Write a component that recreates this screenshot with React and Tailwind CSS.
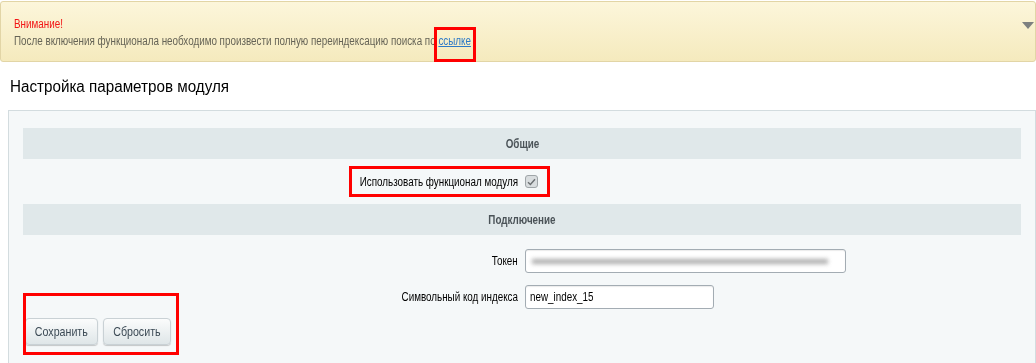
import React from 'react';

const FONT = { fontFamily: '"Liberation Sans", Arial, sans-serif' };

// The original UI text is a narrow Arial; squeeze the glyphs horizontally
const Narrow = ({ origin = 'origin-left', children }) => (
  <span className={`inline-block whitespace-nowrap scale-x-[0.82] ${origin}`}>{children}</span>
);

const SectionHeader = ({ title }) => (
  <div className="h-[31px] bg-[#e0e8ea] flex items-center justify-center text-[12px] font-bold text-[#4b5358]">
    <Narrow origin="origin-center">{title}</Narrow>
  </div>
);

const FieldRow = ({ label, children }) => (
  <div className="grid grid-cols-[498px_1fr] items-center">
    <div className="text-right pr-[3px] text-[12px] text-[#000]">
      <Narrow origin="origin-right">{label}</Narrow>
    </div>
    <div className="pl-[4px] flex items-center">{children}</div>
  </div>
);

const TextInput = ({ width, children }) => (
  <div
    className={`${width} h-[24px] bg-white border border-[#a3acb3] rounded-[3px] shadow-[inset_0_1px_1px_rgba(0,0,0,0.08)] flex items-center px-[4px] text-[12px] text-[#000]`}
  >
    {children}
  </div>
);

const Button = ({ children, width }) => (
  <button
    className={`${width} h-[27px] rounded-[4px] border border-[#c9d1d5] bg-gradient-to-b from-[#fbfcfc] to-[#dfe6e8] shadow-[0_1px_1px_rgba(0,0,0,0.2)] text-[13px] text-[#3c4a55] flex items-center justify-center`}
  >
    <Narrow origin="origin-center">{children}</Narrow>
  </button>
);

export default function App() {
  return (
    <div className="relative w-[1036px] h-[363px] bg-white overflow-hidden" style={FONT}>
      {/* Warning */}
      <div className="mt-[1px] h-[61px] rounded-[3px] border border-[#e2d5a6] bg-gradient-to-b from-[#fcf6db] to-[#f5eabd] pl-[13px] pt-[15px] relative">
        <div className="text-[12px] leading-[15px] text-[#f21515]">
          <Narrow>Внимание!</Narrow>
        </div>
        <div className="text-[12px] leading-[15px] mt-[2px] text-[#666456]">
          <Narrow>
            После включения функционала необходимо произвести полную переиндексацию поиска по{' '}
            <a className="text-[#2c79c7] underline" href="#">ссылке</a>
          </Narrow>
        </div>
        <div className="absolute right-[1px] top-[20px] w-0 h-0 border-l-[6px] border-r-[6px] border-t-[7px] border-l-transparent border-r-transparent border-t-[#7d8080]" />
      </div>

      {/* Title */}
      <div className="pl-[10px] pt-[13px] h-[48px] text-[16px] text-[#000]">
        <span className="inline-block whitespace-nowrap scale-x-[0.95] origin-left">Настройка параметров модуля</span>
      </div>

      {/* Panel */}
      <div className="ml-[8px] h-[260px] border border-[#d3dcdf] bg-[#f5f8f9] pt-[17px] pl-[14px] pr-[14px]">
        <SectionHeader title="Общие" />
        <div className="h-[45px] grid grid-cols-[498px_1fr] items-center">
          <div className="text-right pr-[3px] text-[12px] text-[#000]">
            <Narrow origin="origin-right">Использовать функционал модуля</Narrow>
          </div>
          <div className="pl-[4px] flex items-center">
            <div className="w-[13px] h-[13px] rounded-[3px] border border-[#9fa5a8] bg-[#d9dddf] flex items-center justify-center">
              <svg width="9" height="8" viewBox="0 0 9 8">
                <path d="M1 4.2 L3.4 6.5 L8 1.2" fill="none" stroke="#6b6f72" strokeWidth="1.4" />
              </svg>
            </div>
          </div>
        </div>
        <SectionHeader title="Подключение" />
        <div className="pt-[14px] flex flex-col gap-[12px]">
          <FieldRow label="Токен">
            <TextInput width="w-[321px]">
              <div className="ml-[2px] w-[296px] h-[5px] bg-[#9a9a9a] blur-[2px] opacity-80" />
            </TextInput>
          </FieldRow>
          <FieldRow label="Символьный код индекса">
            <TextInput width="w-[189px]">
              <Narrow>new_index_15</Narrow>
            </TextInput>
          </FieldRow>
        </div>
        <div className="mt-[9px] ml-[2px] flex gap-[5px]">
          <Button width="w-[73px]">Сохранить</Button>
          <Button width="w-[68px]">Сбросить</Button>
        </div>
      </div>

      {/* Annotation boxes */}
      <div className="absolute left-[434px] top-[27px] w-[42px] h-[35px] border-[3px] border-[#f00]" />
      <div className="absolute left-[349px] top-[166px] w-[201px] h-[31px] border-[3px] border-[#f00]" />
      <div className="absolute left-[23px] top-[293px] w-[156px] h-[62px] border-[3px] border-[#f00]" />
    </div>
  );
}
